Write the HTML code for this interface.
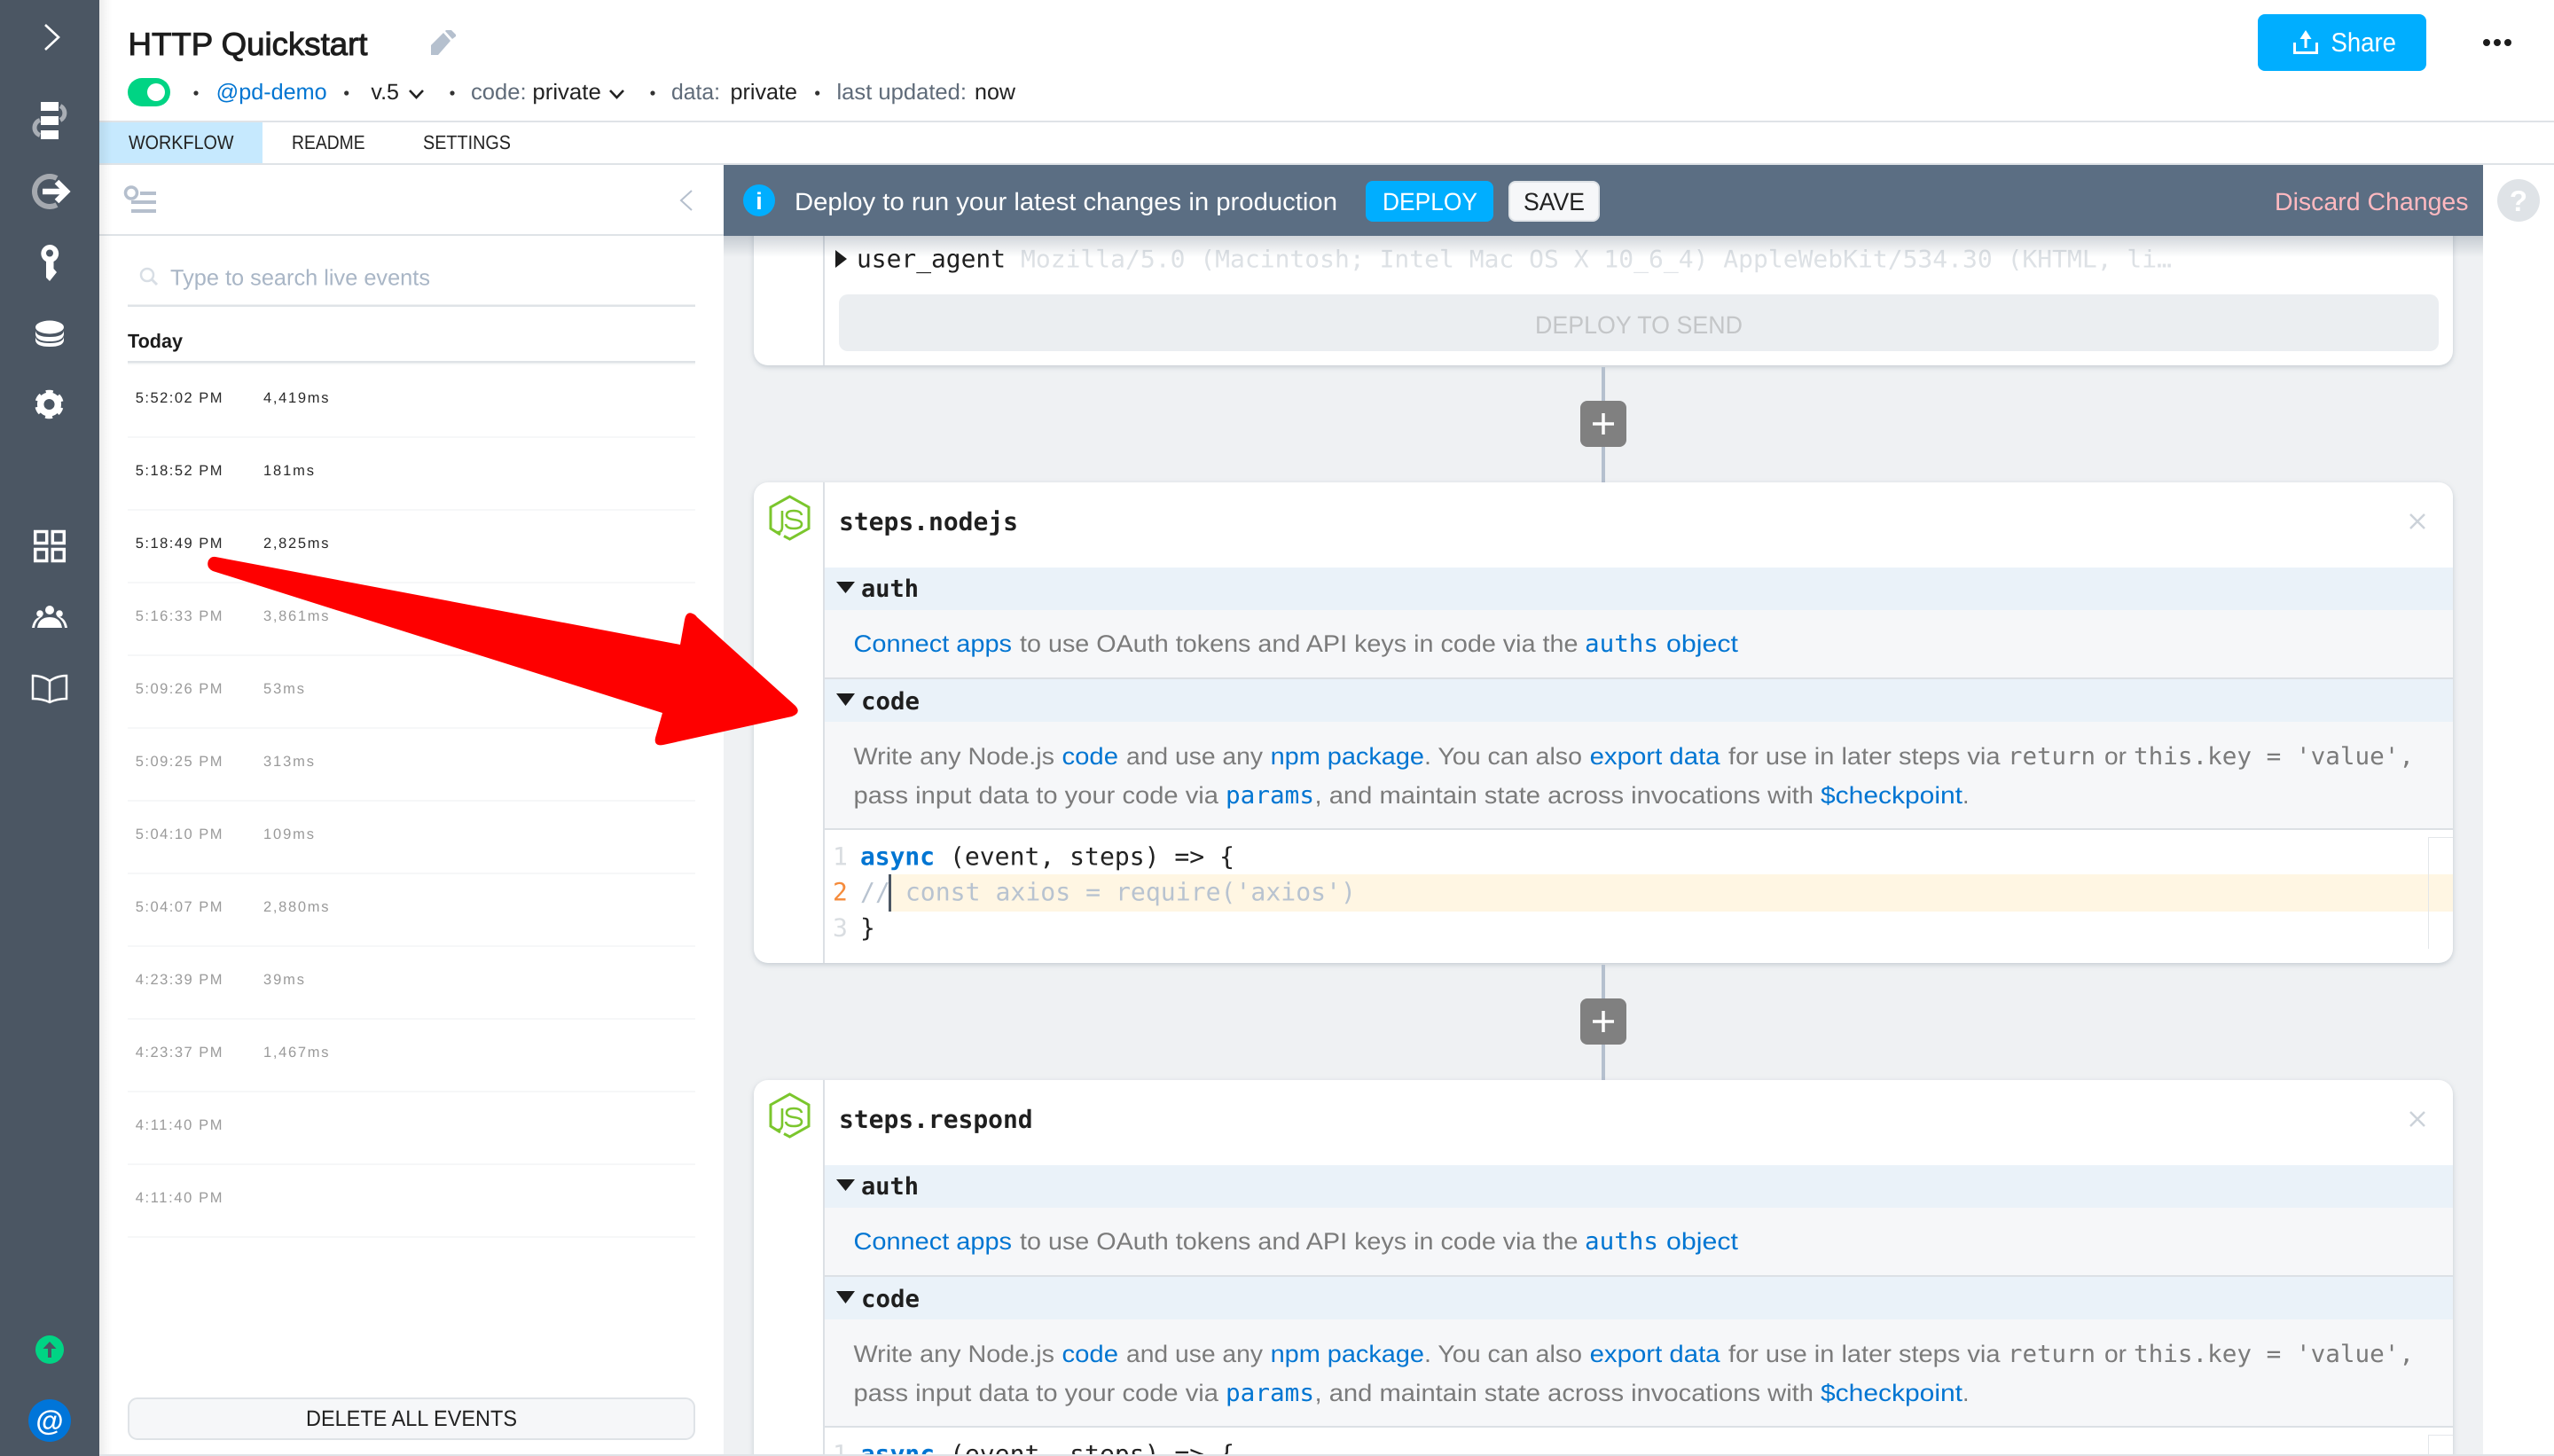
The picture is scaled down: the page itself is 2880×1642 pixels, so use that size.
<!DOCTYPE html>
<html lang="en">
<head>
<meta charset="utf-8">
<title>HTTP Quickstart</title>
<style>
html,body{margin:0;padding:0;background:#fff;width:2880px;height:1642px;overflow:hidden}
svg{display:block}
text{white-space:pre;text-rendering:geometricPrecision}
.s{font-family:"Liberation Sans",sans-serif}
.m{font-family:"DejaVu Sans Mono","Liberation Mono",monospace}
.d{font-size:27px;fill:#7b7b7b}
.l{fill:#0075d2}
.t{font-size:16.5px;letter-spacing:.5px}
.dk{fill:#2a2a2a}
.gy{fill:#9a9a9a}
.b{font-weight:700}
</style>
</head>
<body>
<svg xmlns="http://www.w3.org/2000/svg" width="2880" height="1642" viewBox="0 0 2880 1642">
<defs>
<linearGradient id="sh" x1="0" x2="1" y1="0" y2="0"><stop offset="0" stop-color="#000" stop-opacity=".07"/><stop offset="1" stop-color="#000" stop-opacity="0"/></linearGradient>
<linearGradient id="bs" x1="0" x2="0" y1="0" y2="1"><stop offset="0" stop-color="#33475c" stop-opacity=".22"/><stop offset="1" stop-color="#33475c" stop-opacity="0"/></linearGradient>
</defs>
<rect width="2880" height="1642" fill="#fff"/>

<!-- main background -->
<rect x="816" y="186" width="1984" height="1456" fill="#eff1f3"/>

<!-- top card -->
<g style="filter:drop-shadow(0 2px 3px rgba(70,90,110,.25))"><rect x="850" y="190" width="1916" height="222" rx="16" fill="#fff"/></g>
<rect x="928" y="190" width="2" height="222" fill="#dce0e5"/>
<path d="M942 282 L955 292 L942 302Z" fill="#1c1c1c"/>
<text class="m" x="966" y="301.5" font-size="28" fill="#1f1f1f" textLength="168" lengthAdjust="spacingAndGlyphs">user_agent</text>
<text class="m" x="1151" y="301.5" font-size="27" fill="#dde1e5" textLength="1298" lengthAdjust="spacingAndGlyphs">Mozilla/5.0 (Macintosh; Intel Mac OS X 10_6_4) AppleWebKit/534.30 (KHTML, li…</text>
<rect x="946" y="332" width="1804" height="64" rx="10" fill="#ebeef1"/>
<text class="s" x="1731" y="376" font-size="28" fill="#c4c6c8" textLength="234" lengthAdjust="spacingAndGlyphs">DEPLOY TO SEND</text>

<!-- connector 1 -->
<rect x="1806" y="414" width="4" height="130" fill="#b5c0ce"/>
<rect x="1782" y="452" width="52" height="52" rx="8" fill="#808080"/>
<path d="M1808 466V490M1796 478H1820" stroke="#fff" stroke-width="3.5" fill="none"/>

<!-- card 2 -->
<g style="filter:drop-shadow(0 2px 3px rgba(70,90,110,.25))"><rect x="850" y="544" width="1916" height="542" rx="16" fill="#fff"/></g>
<rect x="928" y="544" width="2" height="542" fill="#dce0e5"/>
<path d="M880 603 L869 596 V572 L890.500 560 L912 572 V596 L890.500 608 L884 604.500" fill="none" stroke="#7bc62d" stroke-width="3"/>
<path d="M882 576 V594 Q882 601 876 600" fill="none" stroke="#7bc62d" stroke-width="2.6"/>
<path d="M904 581 Q903 576 895 576 Q887 576 887 581 Q887 585 895 586 Q904 587 904 591 Q904 596 895 596 Q887 596 886 591" fill="none" stroke="#7bc62d" stroke-width="2.6"/>
<text class="m b" x="946" y="598" font-size="28" fill="#1f1f1f" textLength="202" lengthAdjust="spacingAndGlyphs">steps.nodejs</text>
<path d="M2718 580 L2734 596 M2734 580 L2718 596" stroke="#ccd2d9" stroke-width="2.5" fill="none"/>
<rect x="930" y="640" width="1836" height="48" fill="#eaf2f9"/>
<path d="M943 656 H964 L953.5 669Z" fill="#1c1c1c"/>
<text class="m b" x="971" y="673" font-size="27" fill="#1f1f1f" textLength="65" lengthAdjust="spacingAndGlyphs">auth</text>
<rect x="930" y="688" width="1836" height="76" fill="#f6f7f9"/>
<text class="s d l" x="962.5" y="735" textLength="178.5" lengthAdjust="spacingAndGlyphs">Connect apps</text>
<text class="s d" x="1150" y="735" textLength="629.5" lengthAdjust="spacingAndGlyphs">to use OAuth tokens and API keys in code via the</text>
<text class="m d l" x="1787" y="735" textLength="83" lengthAdjust="spacingAndGlyphs">auths</text>
<text class="s d l" x="1879" y="735" textLength="81" lengthAdjust="spacingAndGlyphs">object</text>
<rect x="930" y="764" width="1836" height="2" fill="#dce0e5"/>
<rect x="930" y="766" width="1836" height="48" fill="#eaf2f9"/>
<path d="M943 782 H964 L953.5 796Z" fill="#1c1c1c"/>
<text class="m b" x="971" y="800" font-size="27" fill="#1f1f1f" textLength="66" lengthAdjust="spacingAndGlyphs">code</text>
<rect x="930" y="814" width="1836" height="120" fill="#f6f7f9"/>
<text class="s d" x="962.5" y="862" textLength="226.5" lengthAdjust="spacingAndGlyphs">Write any Node.js</text>
<text class="s d l" x="1197.5" y="862" textLength="63.5" lengthAdjust="spacingAndGlyphs">code</text>
<text class="s d" x="1270" y="862" textLength="154" lengthAdjust="spacingAndGlyphs">and use any</text>
<text class="s d l" x="1432.6" y="862" textLength="173.4" lengthAdjust="spacingAndGlyphs">npm package</text>
<text class="s d" x="1606" y="862" textLength="178" lengthAdjust="spacingAndGlyphs">. You can also</text>
<text class="s d l" x="1792.6" y="862" textLength="147" lengthAdjust="spacingAndGlyphs">export data</text>
<text class="s d" x="1949" y="862" textLength="306.5" lengthAdjust="spacingAndGlyphs">for use in later steps via</text>
<text class="m d" x="2264" y="862" textLength="99" lengthAdjust="spacingAndGlyphs">return</text>
<text class="s d" x="2373" y="862" textLength="25" lengthAdjust="spacingAndGlyphs">or</text>
<text class="m d" x="2406" y="862" textLength="316" lengthAdjust="spacingAndGlyphs">this.key = 'value',</text>
<text class="s d" x="962.5" y="906" textLength="411.5" lengthAdjust="spacingAndGlyphs">pass input data to your code via</text>
<text class="m d l" x="1382" y="906" textLength="100" lengthAdjust="spacingAndGlyphs">params</text>
<text class="s d" x="1482.5" y="906" textLength="562.5" lengthAdjust="spacingAndGlyphs">, and maintain state across invocations with</text>
<text class="s d l" x="2053" y="906" textLength="160" lengthAdjust="spacingAndGlyphs">$checkpoint</text>
<text class="s d" x="2213" y="906">.</text>
<rect x="930" y="934" width="1836" height="2" fill="#dce0e5"/>
<rect x="1004" y="986" width="1762" height="42" fill="#fff6e3"/>
<rect x="2738" y="944" width="1" height="126" fill="#e3e6ea"/>
<rect x="2738" y="944" width="28" height="1" fill="#e3e6ea"/>
<text class="m" x="939" y="975.5" font-size="28" fill="#d9dde1">1</text>
<text class="m" x="939" y="1015.5" font-size="28" fill="#f58b3b">2</text>
<text class="m" x="939" y="1056" font-size="28" fill="#d9dde1">3</text>
<text class="m b" x="970" y="975.5" font-size="28" fill="#0075d2" textLength="84" lengthAdjust="spacingAndGlyphs">async</text>
<text class="m" x="1071" y="975.5" font-size="28" fill="#222" textLength="321" lengthAdjust="spacingAndGlyphs">(event, steps) =&gt; {</text>
<text class="m" x="970" y="1015.5" font-size="28" fill="#b8c3d0" textLength="559" lengthAdjust="spacingAndGlyphs">// const axios = require('axios')</text>
<rect x="1002" y="986" width="3" height="42" fill="#4b5663"/>
<text class="m" x="970" y="1056" font-size="28" fill="#222">}</text>

<!-- connector 2 -->
<rect x="1806" y="1088" width="4" height="130" fill="#b5c0ce"/>
<rect x="1782" y="1126" width="52" height="52" rx="8" fill="#808080"/>
<path d="M1808 1140V1164M1796 1152H1820" stroke="#fff" stroke-width="3.5" fill="none"/>

<!-- card 3 -->
<g style="filter:drop-shadow(0 2px 3px rgba(70,90,110,.25))"><rect x="850" y="1218" width="1916" height="480" rx="16" fill="#fff"/></g>
<rect x="928" y="1218" width="2" height="480" fill="#dce0e5"/>
<g transform="translate(0,674)">
<path d="M880 603 L869 596 V572 L890.500 560 L912 572 V596 L890.500 608 L884 604.500" fill="none" stroke="#7bc62d" stroke-width="3"/>
<path d="M882 576 V594 Q882 601 876 600" fill="none" stroke="#7bc62d" stroke-width="2.6"/>
<path d="M904 581 Q903 576 895 576 Q887 576 887 581 Q887 585 895 586 Q904 587 904 591 Q904 596 895 596 Q887 596 886 591" fill="none" stroke="#7bc62d" stroke-width="2.6"/>
<text class="m b" x="946" y="598" font-size="28" fill="#1f1f1f" textLength="218.6" lengthAdjust="spacingAndGlyphs">steps.respond</text>
<path d="M2718 580 L2734 596 M2734 580 L2718 596" stroke="#ccd2d9" stroke-width="2.5" fill="none"/>
<rect x="930" y="640" width="1836" height="48" fill="#eaf2f9"/>
<path d="M943 656 H964 L953.5 669Z" fill="#1c1c1c"/>
<text class="m b" x="971" y="673" font-size="27" fill="#1f1f1f" textLength="65" lengthAdjust="spacingAndGlyphs">auth</text>
<rect x="930" y="688" width="1836" height="76" fill="#f6f7f9"/>
<text class="s d l" x="962.5" y="735" textLength="178.5" lengthAdjust="spacingAndGlyphs">Connect apps</text>
<text class="s d" x="1150" y="735" textLength="629.5" lengthAdjust="spacingAndGlyphs">to use OAuth tokens and API keys in code via the</text>
<text class="m d l" x="1787" y="735" textLength="83" lengthAdjust="spacingAndGlyphs">auths</text>
<text class="s d l" x="1879" y="735" textLength="81" lengthAdjust="spacingAndGlyphs">object</text>
<rect x="930" y="764" width="1836" height="2" fill="#dce0e5"/>
<rect x="930" y="766" width="1836" height="48" fill="#eaf2f9"/>
<path d="M943 782 H964 L953.5 796Z" fill="#1c1c1c"/>
<text class="m b" x="971" y="800" font-size="27" fill="#1f1f1f" textLength="66" lengthAdjust="spacingAndGlyphs">code</text>
<rect x="930" y="814" width="1836" height="120" fill="#f6f7f9"/>
<text class="s d" x="962.5" y="862" textLength="226.5" lengthAdjust="spacingAndGlyphs">Write any Node.js</text>
<text class="s d l" x="1197.5" y="862" textLength="63.5" lengthAdjust="spacingAndGlyphs">code</text>
<text class="s d" x="1270" y="862" textLength="154" lengthAdjust="spacingAndGlyphs">and use any</text>
<text class="s d l" x="1432.6" y="862" textLength="173.4" lengthAdjust="spacingAndGlyphs">npm package</text>
<text class="s d" x="1606" y="862" textLength="178" lengthAdjust="spacingAndGlyphs">. You can also</text>
<text class="s d l" x="1792.6" y="862" textLength="147" lengthAdjust="spacingAndGlyphs">export data</text>
<text class="s d" x="1949" y="862" textLength="306.5" lengthAdjust="spacingAndGlyphs">for use in later steps via</text>
<text class="m d" x="2264" y="862" textLength="99" lengthAdjust="spacingAndGlyphs">return</text>
<text class="s d" x="2373" y="862" textLength="25" lengthAdjust="spacingAndGlyphs">or</text>
<text class="m d" x="2406" y="862" textLength="316" lengthAdjust="spacingAndGlyphs">this.key = 'value',</text>
<text class="s d" x="962.5" y="906" textLength="411.5" lengthAdjust="spacingAndGlyphs">pass input data to your code via</text>
<text class="m d l" x="1382" y="906" textLength="100" lengthAdjust="spacingAndGlyphs">params</text>
<text class="s d" x="1482.5" y="906" textLength="562.5" lengthAdjust="spacingAndGlyphs">, and maintain state across invocations with</text>
<text class="s d l" x="2053" y="906" textLength="160" lengthAdjust="spacingAndGlyphs">$checkpoint</text>
<text class="s d" x="2213" y="906">.</text>
<rect x="930" y="934" width="1836" height="2" fill="#dce0e5"/>
<rect x="2738" y="944" width="1" height="100" fill="#e3e6ea"/>
<rect x="2738" y="944" width="28" height="1" fill="#e3e6ea"/>
<text class="m" x="939" y="975.5" font-size="28" fill="#d9dde1">1</text>
<text class="m b" x="970" y="975.5" font-size="28" fill="#0075d2" textLength="84" lengthAdjust="spacingAndGlyphs">async</text>
<text class="m" x="1071" y="975.5" font-size="28" fill="#222" textLength="321" lengthAdjust="spacingAndGlyphs">(event, steps) =&gt; {</text>
</g>

<!-- left events panel -->
<rect x="112" y="186" width="704" height="1456" fill="#fff"/>
<rect x="112" y="264" width="704" height="2" fill="#dfe3e7"/>
<circle cx="148" cy="217.5" r="6.5" fill="none" stroke="#b5bfcd" stroke-width="3.5"/>
<rect x="158" y="216" width="18" height="4" fill="#b5bfcd"/>
<rect x="148" y="226" width="28" height="4" fill="#b5bfcd"/>
<rect x="148" y="236" width="28" height="4" fill="#b5bfcd"/>
<path d="M780 215 L768 226 L780 237" fill="none" stroke="#b5bfcd" stroke-width="2"/>
<circle cx="166" cy="310" r="7" fill="none" stroke="#d8dee5" stroke-width="2.5"/>
<path d="M171 315 L177 321" stroke="#d8dee5" stroke-width="3"/>
<text class="s" x="192" y="321.500" font-size="25" fill="#a9b6c6" textLength="293" lengthAdjust="spacingAndGlyphs">Type to search live events</text>
<rect x="144" y="343.5" width="640" height="2.5" fill="#dfe3e7"/>
<text class="s b" x="144" y="392" font-size="22" fill="#1c1c1c" textLength="62" lengthAdjust="spacingAndGlyphs">Today</text>
<rect x="144" y="407" width="640" height="2.5" fill="#dfe3e7"/>
<rect x="144" y="409.5" width="640" height="2" fill="#f7f8f9"/>

<g class="s t">
<text class="dk" x="152.7" y="454" textLength="98.3">5:52:02 PM</text><text class="dk" x="297" y="454" textLength="74">4,419ms</text>
<text class="dk" x="152.7" y="536" textLength="98.3">5:18:52 PM</text><text class="dk" x="297" y="536" textLength="57.5">181ms</text>
<text class="dk" x="152.7" y="618" textLength="98.3">5:18:49 PM</text><text class="dk" x="297" y="618" textLength="74">2,825ms</text>
<text class="gy" x="152.7" y="700" textLength="98.3">5:16:33 PM</text><text class="gy" x="297" y="700" textLength="74">3,861ms</text>
<text class="gy" x="152.7" y="782" textLength="98.3">5:09:26 PM</text><text class="gy" x="297" y="782" textLength="46.5">53ms</text>
<text class="gy" x="152.7" y="864" textLength="98.3">5:09:25 PM</text><text class="gy" x="297" y="864" textLength="57.5">313ms</text>
<text class="gy" x="152.7" y="946" textLength="98.3">5:04:10 PM</text><text class="gy" x="297" y="946" textLength="57.5">109ms</text>
<text class="gy" x="152.7" y="1028" textLength="98.3">5:04:07 PM</text><text class="gy" x="297" y="1028" textLength="74">2,880ms</text>
<text class="gy" x="152.7" y="1110" textLength="98.3">4:23:39 PM</text><text class="gy" x="297" y="1110" textLength="46.5">39ms</text>
<text class="gy" x="152.7" y="1192" textLength="98.3">4:23:37 PM</text><text class="gy" x="297" y="1192" textLength="74">1,467ms</text>
<text class="gy" x="152.7" y="1274" textLength="98.3">4:11:40 PM</text>
<text class="gy" x="152.7" y="1356" textLength="98.3">4:11:40 PM</text>
</g>
<g fill="#f6f7f8">
<rect x="144" y="492" width="640" height="2"/><rect x="144" y="574" width="640" height="2"/><rect x="144" y="656" width="640" height="2"/>
<rect x="144" y="738" width="640" height="2"/><rect x="144" y="820" width="640" height="2"/><rect x="144" y="902" width="640" height="2"/>
<rect x="144" y="984" width="640" height="2"/><rect x="144" y="1066" width="640" height="2"/><rect x="144" y="1148" width="640" height="2"/>
<rect x="144" y="1230" width="640" height="2"/><rect x="144" y="1312" width="640" height="2"/><rect x="144" y="1394" width="640" height="2"/>
</g>
<rect x="145" y="1577" width="638" height="46" rx="10" fill="#f6f7f9" stroke="#dfe3e7" stroke-width="2"/>
<text class="s" x="345" y="1608" font-size="25" fill="#222" textLength="238" lengthAdjust="spacingAndGlyphs">DELETE ALL EVENTS</text>

<!-- banner -->
<rect x="816" y="266" width="1984" height="24" fill="url(#bs)"/>
<rect x="816" y="186" width="1984" height="80" fill="#5b6e83"/>
<circle cx="856" cy="226" r="18" fill="#00aeff"/>
<text class="s b" x="856" y="236" font-size="27" fill="#fff" text-anchor="middle">i</text>
<text class="s" x="896" y="237" font-size="28" fill="#fff" textLength="612" lengthAdjust="spacingAndGlyphs">Deploy to run your latest changes in production</text>
<rect x="1540" y="204" width="144" height="46" rx="8" fill="#00aeff"/>
<text class="s" x="1559" y="237" font-size="28" fill="#fff" textLength="107" lengthAdjust="spacingAndGlyphs">DEPLOY</text>
<rect x="1702" y="205" width="101" height="44" rx="7" fill="#f6f7f9" stroke="#dfe3e7" stroke-width="2"/>
<text class="s" x="1718" y="237" font-size="28" fill="#222" textLength="69" lengthAdjust="spacingAndGlyphs">SAVE</text>
<text class="s" x="2565" y="237" font-size="28" fill="#ffb9c0" textLength="218.5" lengthAdjust="spacingAndGlyphs">Discard Changes</text>
<circle cx="2840" cy="226" r="24" fill="#dfe3e7"/>
<text class="s b" x="2840" y="238" font-size="33" fill="#fff" text-anchor="middle">?</text>

<!-- header -->
<rect x="112" y="0" width="2768" height="136" fill="#fff"/>
<rect x="112" y="136" width="2768" height="2" fill="#dfe3e7"/>
<rect x="112" y="138" width="2768" height="46" fill="#fff"/>
<rect x="112" y="184" width="2768" height="2" fill="#dfe3e7"/>
<text class="s" x="144.500" y="62" font-size="36" fill="#1d1d1d" stroke="#1d1d1d" stroke-width="1" textLength="270" lengthAdjust="spacingAndGlyphs">HTTP Quickstart</text>
<path d="M486 62 V51 L500 37 L508 46 L494 62Z M503 34 L509 34 L514 39 L514 41 L510 44 L502 35Z" fill="#b5c0ce"/>
<rect x="144" y="88" width="48" height="32" rx="16" fill="#00d484"/>
<circle cx="176" cy="104" r="10" fill="#fff"/>
<g fill="#333"><circle cx="221" cy="105" r="2.6"/><circle cx="390.7" cy="105" r="2.6"/><circle cx="510" cy="105" r="2.6"/><circle cx="736" cy="105" r="2.6"/><circle cx="921.7" cy="105" r="2.6"/></g>
<text class="s l" x="243.7" y="112" font-size="25" textLength="125" lengthAdjust="spacingAndGlyphs">@pd-demo</text>
<text class="s" x="418.4" y="112" font-size="25" fill="#222" textLength="31.6" lengthAdjust="spacingAndGlyphs">v.5</text>
<path d="M462 102 L469.5 110 L477 102" fill="none" stroke="#222" stroke-width="2.6"/>
<text class="s" x="531" y="112" font-size="25" fill="#5f6b79" textLength="62.6" lengthAdjust="spacingAndGlyphs">code:</text>
<text class="s" x="600.4" y="112" font-size="25" fill="#222" textLength="77.4" lengthAdjust="spacingAndGlyphs">private</text>
<path d="M688 102 L695.5 110 L703 102" fill="none" stroke="#222" stroke-width="2.6"/>
<text class="s" x="757" y="112" font-size="25" fill="#5f6b79" textLength="55" lengthAdjust="spacingAndGlyphs">data:</text>
<text class="s" x="823.5" y="112" font-size="25" fill="#222" textLength="75.5" lengthAdjust="spacingAndGlyphs">private</text>
<text class="s" x="943.5" y="112" font-size="25" fill="#5f6b79" textLength="146.5" lengthAdjust="spacingAndGlyphs">last updated:</text>
<text class="s" x="1099" y="112" font-size="25" fill="#222" textLength="46" lengthAdjust="spacingAndGlyphs">now</text>
<rect x="112" y="138" width="184" height="46" fill="#c6e9fe"/>
<text class="s" x="145" y="168" font-size="22" fill="#222" textLength="118.6" lengthAdjust="spacingAndGlyphs">WORKFLOW</text>
<text class="s" x="329" y="168" font-size="22" fill="#222" textLength="82.6" lengthAdjust="spacingAndGlyphs">README</text>
<text class="s" x="477" y="168" font-size="22" fill="#222" textLength="99" lengthAdjust="spacingAndGlyphs">SETTINGS</text>
<rect x="2546" y="16" width="190" height="64" rx="8" fill="#00aeff"/>
<path d="M2600 37 V54" stroke="#fff" stroke-width="3" fill="none"/>
<path d="M2593.5 44 L2600 34 L2606.5 44Z" fill="#fff"/>
<path d="M2587.5 48 V59.5 H2612.5 V48" stroke="#fff" stroke-width="3" fill="none"/>
<text class="s" x="2628.5" y="58" font-size="30" fill="#fff" textLength="73.5" lengthAdjust="spacingAndGlyphs">Share</text>
<g fill="#1c1c1c"><circle cx="2804" cy="48" r="4"/><circle cx="2816" cy="48" r="4"/><circle cx="2828" cy="48" r="4"/></g>

<!-- bottom line -->
<rect x="112" y="1640" width="2768" height="2" fill="#dfe3e7"/>

<!-- nav sidebar -->
<rect x="112" y="0" width="14" height="1640" fill="url(#sh)"/>
<rect x="0" y="0" width="112" height="1642" fill="#4b5663"/>
<path d="M51 28 L66 42 L51 56" fill="none" stroke="#fff" stroke-width="2.6"/>
<!-- workflows -->
<path d="M68 119.5 A9 9 0 0 1 68 135.5" fill="none" stroke="#a9aeb5" stroke-width="5"/>
<path d="M45 135.5 A9 9 0 0 0 45 152.5" fill="none" stroke="#a9aeb5" stroke-width="5"/>
<rect x="46" y="115" width="20" height="10" fill="#fff"/><rect x="46" y="131" width="20" height="10" fill="#fff"/><rect x="46" y="147" width="20" height="10" fill="#fff"/>
<!-- sources -->
<path d="M64 201 A17 17 0 1 0 64 231" fill="none" stroke="#a5a9af" stroke-width="6"/>
<path d="M48 216 H74" stroke="#fff" stroke-width="6.5" fill="none"/>
<path d="M64 205 L75 216 L64 227" stroke="#fff" stroke-width="6.5" fill="none"/>
<!-- key -->
<path fill-rule="evenodd" d="M56 276 A10 10 0 0 1 60.5 295 V303 L64 307 L56 317 L52 313 V295 A10 10 0 0 1 56 276Z M56 281.5 A4 4 0 1 0 56 289.5 A4 4 0 1 0 56 281.5Z" fill="#fff"/>
<!-- database -->
<ellipse cx="56" cy="369" rx="16" ry="7.5" fill="#fff"/>
<path d="M40 373 Q41 380 56 380 Q71 380 72 373 V377 Q71 385 56 385 Q41 385 40 377Z" fill="#fff"/>
<path d="M40 380 Q41 387 56 387 Q71 387 72 380 V384 Q71 391 56 391 Q41 391 40 384Z" fill="#fff"/>
<!-- gear -->
<circle cx="55.5" cy="456" r="9.8" fill="none" stroke="#fff" stroke-width="7.5"/>
<circle cx="55.5" cy="456" r="13.5" fill="none" stroke="#fff" stroke-width="5.5" stroke-dasharray="7.5 6.64" transform="rotate(-105 55.5 456)"/>
<!-- grid -->
<g fill="none" stroke="#fff" stroke-width="3.5"><rect x="39.7" y="599.5" width="13" height="13"/><rect x="59.3" y="599.5" width="13" height="13"/><rect x="39.7" y="619.5" width="13" height="13"/><rect x="59.3" y="619.5" width="13" height="13"/></g>
<!-- team -->
<g fill="#fff"><circle cx="45" cy="692" r="3.8"/><circle cx="56" cy="688" r="5"/><circle cx="67" cy="692" r="3.8"/>
<path d="M36 708 Q38 696 48 695 Q40 700 39 708Z M76 708 Q74 696 64 695 Q72 700 73 708Z"/>
<path d="M42 708 Q44 696 56 696 Q68 696 70 708Z"/></g>
<!-- book -->
<path d="M56 768 Q48 762 37 762 V788 Q48 788 56 792 Q64 788 75 788 V762 Q64 762 56 768 V792" fill="none" stroke="#fff" stroke-width="2.5"/>
<!-- badges -->
<circle cx="56" cy="1522" r="16" fill="#00d484"/>
<path d="M56 1531 V1517" stroke="#4b5663" stroke-width="4" fill="none"/>
<path d="M48.5 1521 L56 1513 L63.5 1521Z" fill="#4b5663"/>
<circle cx="56" cy="1602" r="24" fill="#0075d9"/>
<text class="s b" x="56" y="1613" font-size="32" fill="#fff" text-anchor="middle">@</text>

<!-- red arrow -->
<path d="M243 628 L767 727 L772 699 Q774 689 781 692 Q784 693 786 696 L897 796 Q904 804 893 808 L748 840 Q737 842 739 832 L747 804 L240 644 Q232 640 235 632 Q238 627 243 628Z" fill="#fe0000"/>
</svg>
</body>
</html>
